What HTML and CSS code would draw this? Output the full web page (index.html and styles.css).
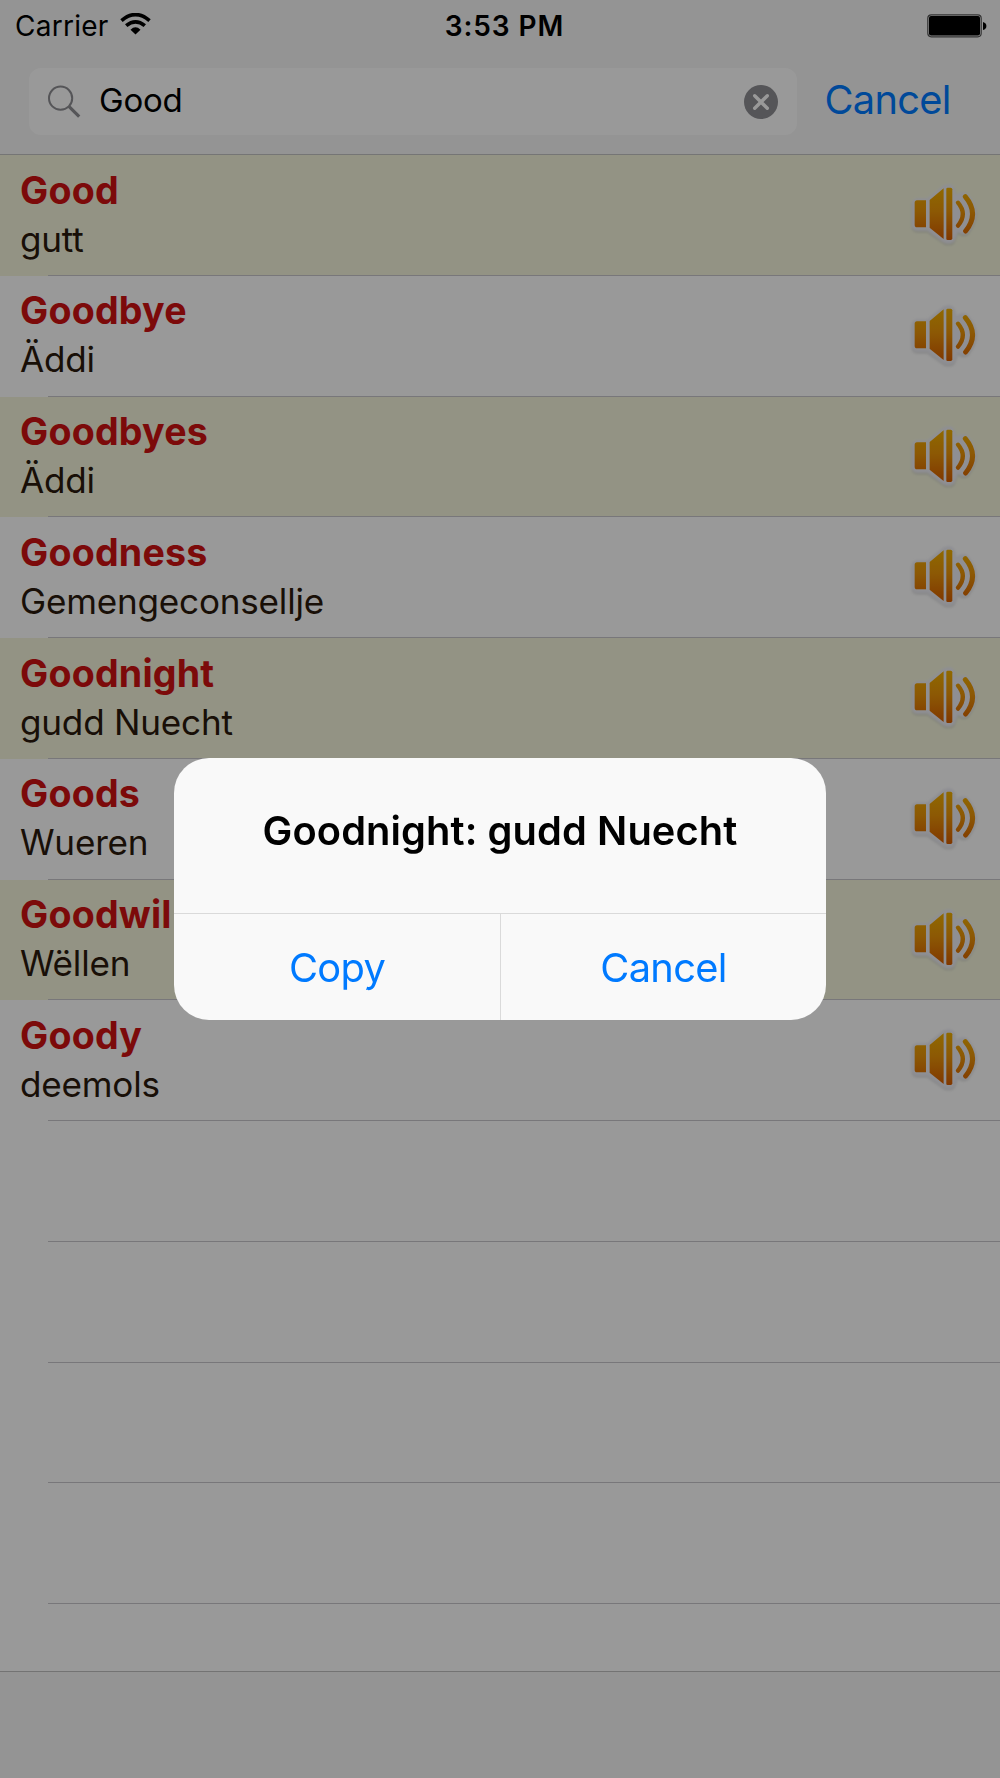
FILE: index.html
```html
<!DOCTYPE html>
<html lang="en">
<head>
<meta charset="utf-8">
<title>Dictionary</title>
<link rel="stylesheet" href="styles.css">
</head>
<body>
<svg class="defs" width="0" height="0" aria-hidden="true">
  <defs>
    <linearGradient id="amber" gradientUnits="userSpaceOnUse" x1="0" y1="112" x2="0" y2="272">
      <stop offset="0" stop-color="#f0b000"/>
      <stop offset=".45" stop-color="#ea9408"/>
      <stop offset="1" stop-color="#d65c00"/>
    </linearGradient>
    <filter id="soft" x="-20%" y="-20%" width="140%" height="140%"><feGaussianBlur stdDeviation="3"/></filter>
    <g id="speaker-shape">
      <path d="M110 151h27v81h-27q-7 0-7-8v-65q0-8 7-8z"/>
      <path d="M148 150L190 115V267L148 233z"/>
      <path d="M198 117q0-4 4-4h9q5 0 5 5v147q0 5-5 5h-9q-4 0-4-4z"/>
      <path d="M233 158q29 34 0 69" fill="none" stroke-width="13" stroke-linecap="round"/>
      <path d="M255 140q43 51 1 103" fill="none" stroke-width="15" stroke-linecap="round"/>
    </g>
    <symbol id="speaker" viewBox="80 90 220 210">
      <g filter="url(#soft)">
        <path d="M110 148h32L192 109q24-8 28 8l6 26q10-16 30-12q54 50 6 114q-14 12-30-6l-10 26q-4 18-30 10L142 239h-32q-12-2-12-14v-64q0-10 12-13z" transform="translate(0 4)" fill="#888" stroke="#888" stroke-width="9" opacity=".3"/>
        <path d="M110 148h32L192 109q24-8 28 8l6 26q10-16 30-12q54 50 6 114q-14 12-30-6l-10 26q-4 18-30 10L142 239h-32q-12-2-12-14v-64q0-10 12-13z" fill="#eeeef5" stroke="#eeeef5" stroke-width="7"/>
      </g>
      <use href="#speaker-shape" fill="url(#amber)" stroke="url(#amber)" stroke-width="0"/>
    </symbol>
  </defs>
</svg>
<div class="screen">
  <header class="navbar">
    <div class="status">
      <div class="status-left">
        <span class="carrier">Carrier</span>
        <svg class="wifi" width="31" height="22" viewBox="0 0 31 22">
          <path d="M1.500 7.600Q15.500-4.400 29.500 7.600" fill="none" stroke="#000" stroke-width="3.700"/>
          <path d="M6.200 12.700Q15.500 4.900 24.800 12.700" fill="none" stroke="#000" stroke-width="3.700"/>
          <path d="M10.500 16.700Q15.500 12 20.500 16.700L15.500 21.600Z"/>
        </svg>
      </div>
      <div class="clock">3:53 PM</div>
      <svg class="battery" width="60" height="24" viewBox="0 0 60 24">
        <rect x=".8" y=".8" width="53.400" height="22" rx="3.500" fill="none" stroke="#000" stroke-opacity=".65" stroke-width="1.200"/>
        <rect x="2" y="2" width="51" height="19.600" rx="2"/>
        <path d="M56 8q3.400 1 3.400 4t-3.400 4z"/>
      </svg>
    </div>
    <div class="search">
      <div class="field">
        <svg class="glass" width="34" height="34" viewBox="0 0 34 34" fill="none" stroke="#8e8e93">
          <circle cx="13.600" cy="13.200" r="11.600" stroke-width="2"/>
          <path d="M21.600 21.200L32.200 31.600" stroke-width="3.200"/>
        </svg>
        <span class="query">Good</span>
        <svg class="clear" width="34" height="34" viewBox="0 0 34 34">
          <circle cx="17" cy="17" r="17" fill="#8e8e93"/>
          <path d="M10.700 10.700L23.300 23.300M23.300 10.700L10.700 23.300" stroke="#fff" stroke-width="3.400" stroke-linecap="round"/>
        </svg>
      </div>
      <span class="cancel">Cancel</span>
    </div>
  </header>
  <main class="list">
    <div class="row"><div class="entry"><div class="word">Good</div><div class="translation">gutt</div></div><svg class="speaker"><use href="#speaker"/></svg></div>
    <div class="row"><div class="entry"><div class="word">Goodbye</div><div class="translation">Äddi</div></div><svg class="speaker"><use href="#speaker"/></svg></div>
    <div class="row"><div class="entry"><div class="word">Goodbyes</div><div class="translation">Äddi</div></div><svg class="speaker"><use href="#speaker"/></svg></div>
    <div class="row"><div class="entry"><div class="word">Goodness</div><div class="translation">Gemengeconsellje</div></div><svg class="speaker"><use href="#speaker"/></svg></div>
    <div class="row"><div class="entry"><div class="word">Goodnight</div><div class="translation">gudd Nuecht</div></div><svg class="speaker"><use href="#speaker"/></svg></div>
    <div class="row"><div class="entry"><div class="word">Goods</div><div class="translation">Wueren</div></div><svg class="speaker"><use href="#speaker"/></svg></div>
    <div class="row"><div class="entry"><div class="word">Goodwil</div><div class="translation">Wëllen</div></div><svg class="speaker"><use href="#speaker"/></svg></div>
    <div class="row"><div class="entry"><div class="word">Goody</div><div class="translation">deemols</div></div><svg class="speaker"><use href="#speaker"/></svg></div>
    <div class="row empty"></div>
    <div class="row empty"></div>
    <div class="row empty"></div>
    <div class="row empty"></div>
  </main>
  <footer class="toolbar"></footer>
</div>
<div class="overlay">
  <div class="alert" role="alertdialog">
    <div class="alert-title">Goodnight: gudd Nuecht</div>
    <div class="actions">
      <div class="action">Copy</div>
      <div class="action">Cancel</div>
    </div>
  </div>
</div>
</body>
</html>
```
FILE: styles.css
```css
* { box-sizing: border-box; }
body {
  margin: 0;
  background: #fff;
  color: #000;
  font-family: Inter, "Liberation Sans", sans-serif;
}
.defs { position: absolute; }
.screen {
  width: 1000px;
  height: 1778px;
  display: flex;
  flex-direction: column;
  overflow: hidden;
}
.navbar {
  flex: none;
  height: 155px;
  background: #f7f7f7;
  border-bottom: 1px solid #c4c4c4;
}
.status {
  height: 51px;
  display: grid;
  grid-template-columns: 1fr auto 1fr;
  align-items: center;
  padding: 0 13px 0 15px;
  font-size: 28px;
}
.status-left { display: flex; align-items: center; gap: 11px; }
.carrier { letter-spacing: .25px; }
.wifi { margin-bottom: 3px; }
.clock { font-weight: 600; letter-spacing: .9px; padding-left: 7px; }
.battery { justify-self: end; }
.search {
  display: flex;
  align-items: center;
  padding: 17px 0 0 29px;
}
.field {
  width: 768px;
  height: 67px;
  padding: 0 19px 0 18px;
  display: flex;
  align-items: center;
  border-radius: 12px;
  background: #fff;
}
.query {
  flex: 1;
  margin: -3px 0 0 18px;
  font-size: 33px;
  letter-spacing: -.2px;
}
.cancel {
  margin: -5px 0 0 27.5px;
  font-size: 39.8px;
  letter-spacing: -.7px;
  color: #007aff;
}
.list { flex: none; height: 1515.5px; }
.row {
  height: 120.75px;
  display: flex;
  justify-content: space-between;
  padding: 11px 20px 0 20px;
  background: linear-gradient(#c8c7cc, #c8c7cc) 48px 100% / 100% 1px no-repeat;
}
.row:nth-child(odd):not(.empty) { background-color: #f5f6dd; }
.entry { line-height: 48px; white-space: nowrap; padding-top: .5px; }
.word {
  font-size: 37.6px;
  font-weight: 700;
  letter-spacing: .2px;
  color: #cf1111;
}
.translation {
  font-size: 35.1px;
  letter-spacing: -.2px;
  color: #2a190d;
}
.speaker { width: 73.300px; height: 70px; margin-top: 14px; }
.toolbar {
  flex: 1;
  background: #f7f7f7;
  border-top: 1px solid #c0c0c0;
}
.overlay {
  position: fixed;
  inset: 0;
  display: flex;
  align-items: center;
  justify-content: center;
  background: rgba(0, 0, 0, .4);
}
.alert {
  width: 652px;
  height: 261.5px;
  display: flex;
  flex-direction: column;
  border-radius: 35px;
  background: #f9f9f9;
  overflow: hidden;
}
.alert-title {
  height: 155px;
  padding-top: 49px;
  line-height: 48px;
  text-align: center;
  font-size: 39.8px;
  font-weight: 600;
  letter-spacing: .1px;
}
.actions {
  flex: 1;
  display: grid;
  grid-template-columns: 1fr 1fr;
  border-top: 1px solid #dadada;
}
.action {
  padding-top: 30px;
  line-height: 48px;
  text-align: center;
  font-size: 39.8px;
  letter-spacing: -.7px;
  color: #007aff;
}
.action + .action { border-left: 1px solid #dadada; }
```
